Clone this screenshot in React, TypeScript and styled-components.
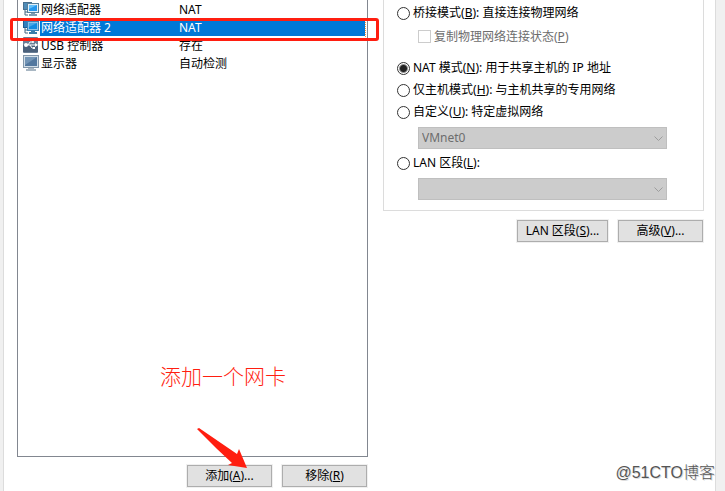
import React, { useState } from 'react';
import styled, { createGlobalStyle, css } from 'styled-components';

const GlobalStyle = createGlobalStyle`
  *, *::before, *::after { box-sizing: border-box; }
  body {
    margin: 0;
    background: #f0f0f0;
    color: #000;
    font: 12px/18px "Noto Sans", "Noto Sans CJK SC", sans-serif;
  }
  button, select, input { font: inherit; margin: 0; }
`;

const Page = styled.main`
  position: relative;
  display: flex;
  min-height: 100vh;
  padding: 0 9px 0 3px;
  overflow: hidden;
`;

const Sheet = styled.div`
  flex: 1;
  display: grid;
  grid-template-columns: minmax(0, 351fr) minmax(0, 321fr);
  column-gap: 15px;
  padding: 0 11px 3px 13px;
  background: #fff;
  border: solid #dcdcdc;
  border-width: 0 1px;
`;

const DevicePane = styled.section`
  position: relative;
  display: flex;
  flex-direction: column;
  gap: 7px;
`;

const DeviceList = styled.div`
  flex: 1;
  padding: 1px 1px 0 5px;
  border: 1px solid #828790;
  border-top: 0;
`;

const DeviceTable = styled.table`
  width: 100%;
  border-collapse: collapse;
  table-layout: fixed;
`;

const DeviceRow = styled.tr<{ $selected?: boolean }>`
  height: 18px;
  ${(p) =>
    p.$selected &&
    css`
      color: #fff;
      td:not(:first-child) {
        background: linear-gradient(#0078d7, #0078d7) 0 1px / 100% 16px no-repeat;
      }
      td:last-child {
        border-right: 1px dotted #ff9838;
      }
    `}
`;

const Cell = styled.td<{ $width?: number }>`
  width: ${(p) => (p.$width ? `${p.$width}px` : 'auto')};
  height: 18px;
  padding: 0 0 0 1px;
  line-height: 18px;
  white-space: nowrap;
`;

const IconCell = styled(Cell)`
  padding: 0;
  vertical-align: top;
  svg { display: block; }
`;

const ButtonRow = styled.div`
  display: flex;
  justify-content: flex-end;
  gap: 8px;
`;

const PushButton = styled.button<{ $wide?: boolean }>`
  width: ${(p) => (p.$wide ? 93 : 87)}px;
  height: 24px;
  padding: 0;
  color: #000;
  background: #e1e1e1;
  border: 1px solid #f0f0f0;
  box-shadow: inset 0 0 0 1px #adadad;
  white-space: nowrap;
`;

const SettingsPane = styled.section`
  display: flex;
  flex-direction: column;
  gap: 8px;
`;

const NetworkGroup = styled.fieldset`
  display: flex;
  flex-direction: column;
  min-width: 0;
  margin: 0;
  padding: 2px 13px 7px;
  border: 1px solid #dcdcdc;
  border-top: 0;
`;

const Option = styled.label<{ $nested?: boolean }>`
  display: flex;
  align-items: center;
  gap: 3px;
  height: ${(p) => (p.$nested ? 25 : 22)}px;
  margin-left: ${(p) => (p.$nested ? 21 : 0)}px;
  margin-bottom: ${(p) => (p.$nested ? 8 : 0)}px;
  color: ${(p) => (p.$nested ? '#6d6d6d' : '#000')};
  white-space: nowrap;
`;

const Radio = styled.input`
  appearance: none;
  flex: none;
  width: 13px;
  height: 13px;
  border: 1px solid #333;
  border-radius: 50%;
  background: #fff;
  &:checked { background: radial-gradient(circle, #222 0 3px, #fff 5px); }
`;

const Tick = styled.input`
  appearance: none;
  flex: none;
  width: 13px;
  height: 13px;
  border: 1px solid #ccc;
  background: #fff;
`;

const Picker = styled.div`
  position: relative;
  margin: 4px 23px 3px 21px;
  svg {
    position: absolute;
    top: 9px;
    right: 4px;
    pointer-events: none;
  }
`;

const Select = styled.select`
  appearance: none;
  display: block;
  width: 100%;
  height: 22px;
  padding: 0 20px 0 3px;
  color: #6d6d6d;
  background: #ccc;
  border: 1px solid #bfbfbf;
  border-radius: 0;
  opacity: 1;
`;

const Highlight = styled.div`
  position: absolute;
  top: 18px;
  left: -7px;
  right: -11px;
  height: 23px;
  border: 3px solid #ff1e10;
  border-radius: 3px;
  pointer-events: none;
`;

const Note = styled.p`
  position: absolute;
  right: 82px;
  bottom: 98px;
  margin: 0;
  color: #ff1e10;
  font-family: "Noto Sans CJK SC", sans-serif;
  font-size: 21px;
  font-weight: 300;
  line-height: 30px;
  white-space: nowrap;
  pointer-events: none;
`;

const Arrow = styled.svg`
  position: absolute;
  right: 120px;
  bottom: 19px;
  pointer-events: none;
`;

const Watermark = styled.div`
  position: absolute;
  right: 10px;
  bottom: 6px;
  color: #555;
  font: 300 16px/24px "Liberation Sans", "Noto Sans CJK SC", sans-serif;
  text-shadow: 1px 1px 0 #ddd;
  white-space: nowrap;
  pointer-events: none;
`;

function NetworkIcon({ selected = false }: { selected?: boolean }) {
  return (
    <svg width="16" height="16" viewBox="0 0 16 16" aria-hidden="true">
      <path d="M0 1h9v8H0z" fill={selected ? '#1c5c94' : '#48708f'} />
      <path d="M1 2h7v6H1z" fill={selected ? '#2f7fbd' : '#4f8cb8'} />
      <path d="M2 9v5h3M2 11h3" fill="none" stroke="#426780" />
      <path d="M4 2h12v10H4z" fill={selected ? '#3a83b8' : '#56809c'} />
      <path d="M5 3h10v8H5z" fill={selected ? '#8cc3e8' : '#e3eff7'} />
      <path d="M6 4h8v6H6z" fill={selected ? '#118be0' : '#2497ed'} />
      <path d="M6 4h8L6 8z" fill={selected ? '#49a6e4' : '#65c0fa'} />
      <path d="M8 12h4v1h2v2H6v-2h2z" fill={selected ? '#397da9' : '#7f9db2'} />
    </svg>
  );
}

function UsbIcon() {
  return (
    <svg width="16" height="16" viewBox="0 0 16 16" aria-hidden="true">
      <rect x="0" y="0" width="15" height="16" rx="1" fill="#6a7f96" />
      <path d="M0 8h15v7H0z" fill="#4b617b" />
      <path d="M3 8h9M5 8l2-3h3M7 8l2 3h2" fill="none" stroke="#fff" />
      <circle cx="3" cy="8" r="2" fill="#fff" />
      <path d="M12 6l3 2-3 2zM10 10h2v2h-2z" fill="#fff" />
      <circle cx="10" cy="5" r="1" fill="#fff" />
    </svg>
  );
}

function DisplayIcon() {
  return (
    <svg width="16" height="16" viewBox="0 0 16 16" aria-hidden="true">
      <path d="M0 0h16v13H0z" fill="#8296a9" />
      <path d="M1 1h14v11H1z" fill="#d3dfe9" />
      <path d="M2 2h12v9H2z" fill="#53789f" />
      <path d="M2 2h12L2 10z" fill="#7395b6" />
      <path d="M5 13h6v1h2v2H3v-2h2z" fill="#a9b7c3" />
    </svg>
  );
}

function Chevron() {
  return (
    <svg width="9" height="6" viewBox="0 0 9 6" aria-hidden="true">
      <path d="M.5.5l4 4 4-4" fill="none" stroke="#9d9d9d" />
    </svg>
  );
}

const devices = [
  { name: '网络适配器', summary: 'NAT', icon: <NetworkIcon /> },
  { name: '网络适配器 2', summary: 'NAT', icon: <NetworkIcon selected />, selected: true },
  { name: 'USB 控制器', summary: '存在', icon: <UsbIcon /> },
  { name: '显示器', summary: '自动检测', icon: <DisplayIcon /> },
];

const modes = [
  { id: 'nat', name: 'NAT 模式', accessKey: 'N', detail: ' 用于共享主机的 IP 地址' },
  { id: 'host', name: '仅主机模式', accessKey: 'H', detail: ' 与主机共享的专用网络' },
  { id: 'custom', name: '自定义', accessKey: 'U', detail: ' 特定虚拟网络' },
];

export default function App() {
  const [mode, setMode] = useState('nat');

  const renderMode = (id: string, name: string, accessKey: string, detail: string) => (
    <Option key={id}>
      <Radio type="radio" name="mode" checked={mode === id} onChange={() => setMode(id)} />
      <span>{name}(<u>{accessKey}</u>):{detail}</span>
    </Option>
  );

  return (
    <>
      <GlobalStyle />
      <Page>
        <Sheet>
          <DevicePane>
            <DeviceList>
              <DeviceTable>
                <tbody>
                  {devices.map((device) => (
                    <DeviceRow key={device.name} $selected={device.selected}>
                      <IconCell $width={17}>{device.icon}</IconCell>
                      <Cell $width={138}>{device.name}</Cell>
                      <Cell>{device.summary}</Cell>
                    </DeviceRow>
                  ))}
                </tbody>
              </DeviceTable>
            </DeviceList>
            <ButtonRow>
              <PushButton type="button">添加(<u>A</u>)...</PushButton>
              <PushButton type="button">移除(<u>R</u>)</PushButton>
            </ButtonRow>
            <Highlight />
            <Note>添加一个网卡</Note>
            <Arrow width="51" height="41" viewBox="0 0 51 41" aria-hidden="true">
              <path d="M0 1l2-1 38 26 2-5 8 19-19-3 4-2L20 21z" fill="#ff1e10" />
            </Arrow>
          </DevicePane>
          <SettingsPane>
            <NetworkGroup>
              {renderMode('bridge', '桥接模式', 'B', ' 直接连接物理网络')}
              <Option $nested>
                <Tick type="checkbox" disabled />
                <span>复制物理网络连接状态(<u>P</u>)</span>
              </Option>
              {modes.map((m) => renderMode(m.id, m.name, m.accessKey, m.detail))}
              <Picker>
                <Select aria-label="特定虚拟网络" disabled>
                  <option>VMnet0</option>
                </Select>
                <Chevron />
              </Picker>
              {renderMode('lan', 'LAN 区段', 'L', '')}
              <Picker>
                <Select aria-label="LAN 区段" disabled />
                <Chevron />
              </Picker>
            </NetworkGroup>
            <ButtonRow>
              <PushButton type="button" $wide>LAN 区段(<u>S</u>)...</PushButton>
              <PushButton type="button">高级(<u>V</u>)...</PushButton>
            </ButtonRow>
          </SettingsPane>
        </Sheet>
        <Watermark>@51CTO博客</Watermark>
      </Page>
    </>
  );
}
